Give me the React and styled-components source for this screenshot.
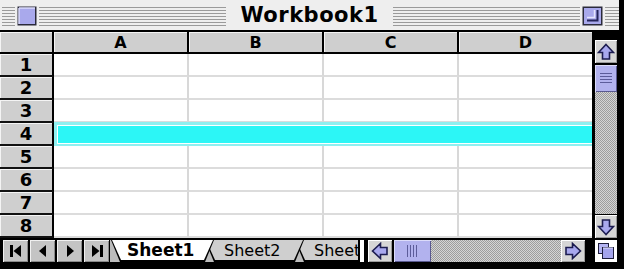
import React from "react";
import styled, { createGlobalStyle } from "styled-components";

const GlobalStyle = createGlobalStyle`
  html, body {
    margin: 0;
    padding: 0;
    background: #000;
  }
  body {
    font-family: "DejaVu Sans", "Liberation Sans", sans-serif;
  }
`;

const columns = ["A", "B", "C", "D"];
const rows = [1, 2, 3, 4, 5, 6, 7, 8];

export default function App() {
  return (
    <>
      <GlobalStyle />
      <Window>
        <TitleBar>
          <Stripes $w="13px" />
          <WinBox>
            <svg width="20" height="20" viewBox="0 0 20 20">
              <rect x="0.5" y="0.5" width="19" height="19" fill="#2a2a3a" />
              <rect x="2" y="2" width="16" height="16" fill="#a9a9ec" />
              <path d="M2 2h16M2 2v16" stroke="#dcdcfb" strokeWidth="1.5" />
            </svg>
          </WinBox>
          <Stripes />
          <Title>Workbook1</Title>
          <Stripes />
          <WinBox>
            <svg width="21" height="20" viewBox="0 0 21 20">
              <rect x="0.5" y="0.5" width="20" height="19" fill="#2a2a3a" />
              <rect x="2" y="2" width="17" height="16" fill="#a9a9ec" />
              <path d="M5 14.5h10.5V4" stroke="#24245a" strokeWidth="2" fill="none" />
              <path d="M5 11.5h7.5V4" stroke="#e4e4fc" strokeWidth="1.5" fill="none" />
            </svg>
          </WinBox>
          <Stripes $w="14px" />
        </TitleBar>

        <Body>
          <Sheet>
            <HeaderRow>
              <Corner />
              {columns.map((c, i) => (
                <ColHead key={c} $last={i === columns.length - 1}>
                  {c}
                </ColHead>
              ))}
            </HeaderRow>
            {rows.map((r) => (
              <Row key={r}>
                <RowHead>{r}</RowHead>
                <Cells $selected={r === 4}>
                  {columns.map((c) => (
                    <Cell key={c} $selected={r === 4} />
                  ))}
                </Cells>
              </Row>
            ))}
          </Sheet>

          <VScroll>
            <ArrowBtn>
              <Arrow dir="up" />
            </ArrowBtn>
            <VThumb>
              <Grip $vertical />
            </VThumb>
            <Track />
            <ArrowBtn $down>
              <Arrow dir="down" />
            </ArrowBtn>
          </VScroll>
        </Body>

        <BottomBar>
          <TabNav>
            <NavBtn>
              <svg width="14" height="14" viewBox="0 0 14 14">
                <rect x="1" y="1" width="3" height="12" fill="#000" />
                <path d="M12 1v12L4.5 7z" fill="#000" />
              </svg>
            </NavBtn>
            <NavBtn>
              <svg width="14" height="14" viewBox="0 0 14 14">
                <path d="M10 1v12L3 7z" fill="#000" />
              </svg>
            </NavBtn>
            <NavBtn>
              <svg width="14" height="14" viewBox="0 0 14 14">
                <path d="M4 1v12l7-6z" fill="#000" />
              </svg>
            </NavBtn>
            <NavBtn>
              <svg width="14" height="14" viewBox="0 0 14 14">
                <path d="M2 1v12l7.5-6z" fill="#000" />
                <rect x="10" y="1" width="3" height="12" fill="#000" />
              </svg>
            </NavBtn>
          </TabNav>

          <TabStrip>
            <Tab $z={3} $w="103px">
              <TabFace $active>Sheet1</TabFace>
            </Tab>
            <Tab $z={2} $w="99px">
              <TabFace>Sheet2</TabFace>
            </Tab>
            <Tab $z={1} $w="99px">
              <TabFace>Sheet3</TabFace>
            </Tab>
          </TabStrip>

          <Splitter />

          <HScroll>
            <ArrowBtn $h>
              <Arrow dir="left" />
            </ArrowBtn>
            <HThumb>
              <Grip />
            </HThumb>
            <Track />
            <ArrowBtn $h>
              <Arrow dir="right" />
            </ArrowBtn>
          </HScroll>

          <SizeBox>
            <svg width="22" height="22" viewBox="0 0 22 22">
              <rect x="3.5" y="3.5" width="10" height="10" fill="#b4b4f2" stroke="#1e1e3c" />
              <rect x="7.5" y="7.5" width="11" height="11" fill="#a4a4ec" stroke="#1e1e3c" />
              <path d="M8 8h10" stroke="#e0e0fc" />
            </svg>
          </SizeBox>
        </BottomBar>
      </Window>
    </>
  );
}

function Arrow({ dir }) {
  const rot = { up: 0, right: 90, down: 180, left: 270 }[dir];
  return (
    <svg
      width="18"
      height="18"
      viewBox="0 0 18 18"
      style={{ transform: `rotate(${rot}deg)` }}
    >
      <path
        d="M9 1.5L16.5 9.5H12.5V16H5.5V9.5H1.5Z"
        fill="#a8a8ee"
        stroke="#1c1c50"
        strokeWidth="1.6"
        strokeLinejoin="miter"
      />
    </svg>
  );
}

const Window = styled.div`
  width: 624px;
  height: 269px;
  background: #000;
  display: flex;
  flex-direction: column;
  overflow: hidden;
`;

const TitleBar = styled.div`
  height: 30px;
  margin: 0 5px 2px 0;
  background: #eeeeee;
  display: flex;
  align-items: center;
  gap: 2px;
  padding: 0 0 0 2px;
  box-sizing: border-box;
`;

const Stripes = styled.div`
  flex: ${(p) => (p.$w ? `0 0 ${p.$w}` : "1")};
  height: 19px;
  margin-top: 2px;
  background: repeating-linear-gradient(
    to bottom,
    #9a9a9a 0 1px,
    transparent 1px 3px
  );
`;

const WinBox = styled.div`
  display: flex;
  margin-top: 2px;
`;

const Title = styled.div`
  padding: 0 12px;
  font-size: 21px;
  font-weight: bold;
  color: #000;
  letter-spacing: 0.5px;
  line-height: 30px;
`;

const Body = styled.div`
  display: flex;
  height: 206px;
`;

const Sheet = styled.div`
  width: 592px;
  display: flex;
  flex-direction: column;
  background: #fff;
`;

const HeaderRow = styled.div`
  height: 22px;
  display: flex;
  background: #000;
`;

const Corner = styled.div`
  flex: 0 0 52px;
  margin: 0 2px 2px 0;
  background: #cfcfcf;
  box-shadow: inset 1px 1px 0 #f4f4f4;
`;

const ColHead = styled.div`
  flex: ${(p) => (p.$last ? "1" : "0 0 133px")};
  margin: 0 ${(p) => (p.$last ? "0" : "2px")} 2px 0;
  background: #cfcfcf;
  box-shadow: inset 1px 1px 0 #f4f4f4;
  display: flex;
  align-items: center;
  justify-content: center;
  font-size: 16px;
  font-weight: bold;
  color: #000;
`;

const Row = styled.div`
  height: 23px;
  display: flex;
`;

const RowHead = styled.div`
  flex: 0 0 54px;
  box-sizing: border-box;
  background: #cfcfcf;
  border-right: 2px solid #000;
  border-bottom: 2px solid #111;
  box-shadow: inset 1px 1px 0 #f4f4f4;
  display: flex;
  align-items: center;
  justify-content: center;
  font-size: 18px;
  font-weight: bold;
  color: #000;
`;

const Cells = styled.div`
  flex: 1;
  display: flex;
  overflow: hidden;
  background: ${(p) => (p.$selected ? "#2cf6f6" : "#fff")};
  box-shadow: ${(p) =>
    p.$selected
      ? "inset 3px 3px 0 #8ef0f0, inset 0 -3px 0 #8ef0f0, inset 4px 4px 0 #fff, inset 0 -4px 0 #fff"
      : "none"};
  margin-top: ${(p) => (p.$selected ? "-1px" : "0")};
  height: ${(p) => (p.$selected ? "25px" : "auto")};
`;

const Cell = styled.div`
  flex: 0 0 135px;
  box-sizing: border-box;
  border-right: 2px solid ${(p) => (p.$selected ? "transparent" : "#d8d8d8")};
  border-bottom: 2px solid ${(p) => (p.$selected ? "transparent" : "#dcdcdc")};
`;

const VScroll = styled.div`
  flex: 0 0 22px;
  margin-left: 3px;
  padding-top: 8px;
  display: flex;
  flex-direction: column;
`;

const ArrowBtn = styled.div`
  flex: 0 0 ${(p) => (p.$h ? "24px" : "23px")};
  margin-top: ${(p) => (p.$down ? "1px" : "0")};
  background: #d6d6d6;
  box-shadow: inset 1px 1px 0 #fff, inset -1px -1px 0 #9a9a9a;
  display: flex;
  align-items: center;
  justify-content: center;
`;

const VThumb = styled.div`
  flex: 0 0 27px;
  margin-top: 2px;
  background: #b2b2ee;
  box-shadow: inset 1px 1px 0 #dcdcfa, inset -1px -1px 0 #5a5a90;
  display: flex;
  align-items: center;
  justify-content: center;
`;

const HThumb = styled.div`
  flex: 0 0 37px;
  margin-left: 2px;
  background: #b2b2ee;
  box-shadow: inset 1px 1px 0 #dcdcfa, inset -1px -1px 0 #5a5a90;
  display: flex;
  align-items: center;
  justify-content: center;
`;

const Grip = styled.span`
  width: ${(p) => (p.$vertical ? "12px" : "11px")};
  height: ${(p) => (p.$vertical ? "11px" : "12px")};
  background: repeating-linear-gradient(
    ${(p) => (p.$vertical ? "to bottom" : "to right")},
    #5c5c9a 0 1px,
    transparent 1px 3px
  );
`;

const Track = styled.div`
  flex: 1;
  background: repeating-conic-gradient(#9c9c9c 0 25%, #d4d4d4 0 50%) 0 0 / 2px
    2px;
`;

const BottomBar = styled.div`
  height: 22px;
  margin-top: 2px;
  display: flex;
`;

const TabNav = styled.div`
  display: flex;
  gap: 2px;
  padding-left: 3px;
`;

const NavBtn = styled.div`
  width: 25px;
  background: #c4c4c4;
  box-shadow: inset 1px 1px 0 #f0f0f0, inset -1px -1px 0 #8a8a8a;
  display: flex;
  align-items: center;
  justify-content: center;
`;

const TabStrip = styled.div`
  width: 248px;
  margin-left: 1px;
  padding-left: 1px;
  box-sizing: border-box;
  display: flex;
  overflow: hidden;
  background: #bcbcbc;
`;

const Tab = styled.div`
  position: relative;
  z-index: ${(p) => p.$z};
  flex: 0 0 ${(p) => p.$w};
  margin-right: -9px;
  display: flex;
  background: #000;
  clip-path: polygon(0 0, 100% 0, calc(100% - 9px) 100%, 9px 100%);
`;

const TabFace = styled.div`
  flex: 1;
  margin: 0 1px 2px 1px;
  padding-left: ${(p) => (p.$active ? "15px" : "18px")};
  background: ${(p) => (p.$active ? "#fff" : "#cfcfcf")};
  clip-path: polygon(0 0, 100% 0, calc(100% - 9px) 100%, 9px 100%);
  display: flex;
  align-items: center;
  font-size: ${(p) => (p.$active ? "17px" : "16px")};
  font-weight: ${(p) => (p.$active ? "bold" : "normal")};
  color: #000;
  white-space: nowrap;
`;

const Splitter = styled.div`
  flex: 0 0 4px;
  margin: 0 3px 0 2px;
  background: #fff;
`;

const HScroll = styled.div`
  flex: 0 0 217px;
  margin-left: 1px;
  display: flex;
  gap: 0;
`;

const SizeBox = styled.div`
  flex: 0 0 22px;
  margin-left: 10px;
  background: #fff;
  display: flex;
  align-items: center;
  justify-content: center;
`;
